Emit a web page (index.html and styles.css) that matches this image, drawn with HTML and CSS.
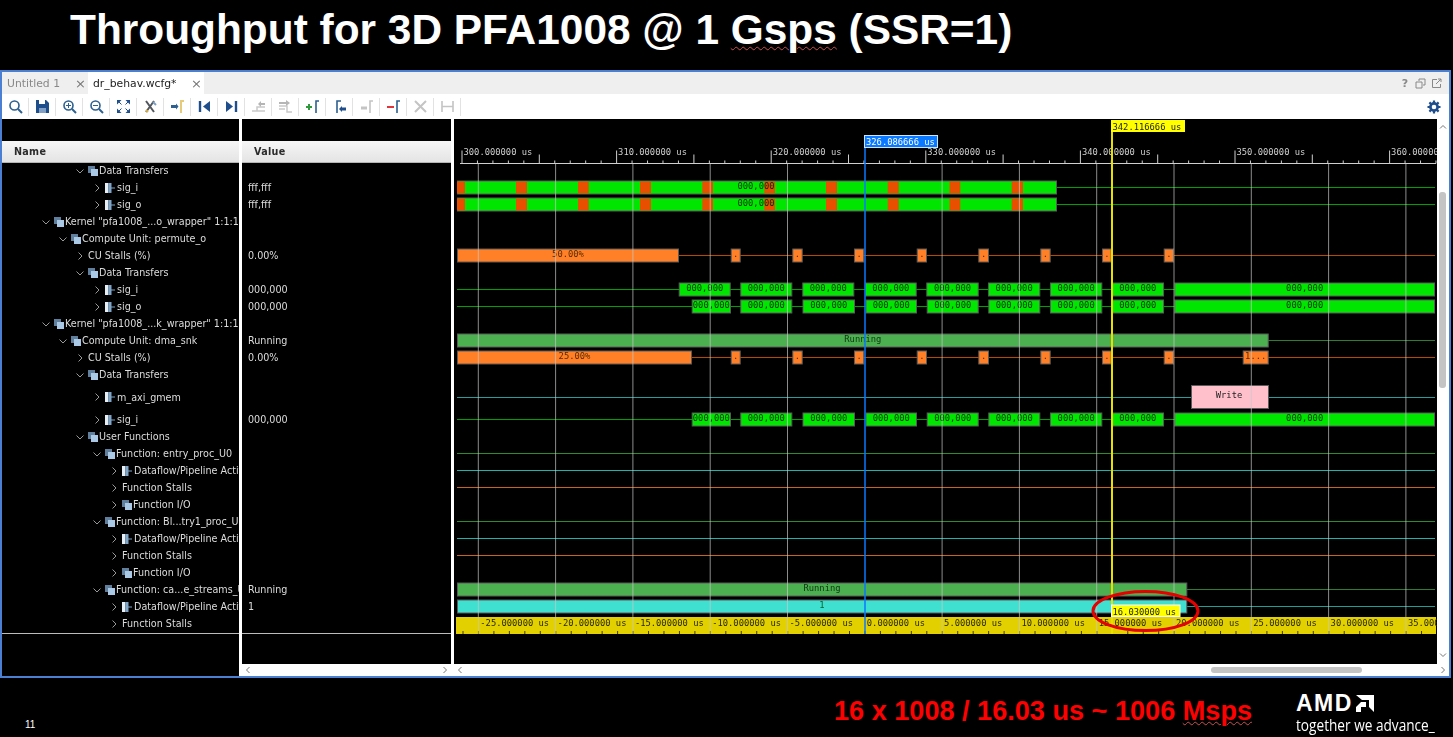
FILE: index.html
```html
<!DOCTYPE html>
<html lang="en">
<head>
    <meta charset="UTF-8">
    <title>Throughput for 3D PFA1008 @ 1 Gsps (SSR=1)</title>
    <link rel="stylesheet" href="styles.css">
</head>
<body>
    <h1 class="title">Throughput for 3D PFA1008 @ 1 <span class="squiggle">Gsps</span> (SSR=1)</h1>

    <div class="window">
        <div class="tabs">
            <div class="tab">Untitled 1<span class="tab-close">&times;</span></div>
            <div class="tab active">dr_behav.wcfg*<span class="tab-close">&times;</span></div>
            <div class="win-controls">
                <span class="win-help">?</span>
                <svg width="11" height="11" viewBox="0 0 11 11"><path d="M4 3V1h6v6H8M1 4h6v6H1z" fill="none" stroke="#888"/></svg>
                <svg width="11" height="11" viewBox="0 0 11 11"><path d="M6 1.500H1.500v8h8V6M5 6l5-5M7 1h3v3" fill="none" stroke="#888"/></svg>
            </div>
        </div>

        <div class="toolbar">
            <div id="tools" class="tools"></div>
            <svg class="gear" width="14" height="14" viewBox="0 0 14 14">
                <circle cx="7" cy="7" r="3.600" fill="none" stroke="#1f4e8c" stroke-width="2.600"/>
                <path d="M7 .5v2.500M7 11v2.500M.5 7H3M11 7h2.500M2.400 2.400l1.800 1.800M9.800 9.800l1.800 1.800M2.400 11.600l1.800-1.800M9.800 4.200l1.800-1.800" stroke="#1f4e8c" stroke-width="2.200"/>
            </svg>
        </div>

        <div class="panes">
            <div class="pane name-pane">
                <div class="pane-head">Name</div>
                <div id="names" class="rows"></div>
                <div class="pane-foot"></div>
            </div>
            <div class="pane value-pane">
                <div class="pane-head">Value</div>
                <div id="values" class="rows"></div>
                <div class="pane-foot"></div>
                <div class="hscroll">
                    <svg class="arrow" viewBox="0 0 8 8"><path d="M5.500 1l-3 3 3 3"/></svg>
                    <svg class="arrow" viewBox="0 0 8 8"><path d="M2.500 1l3 3-3 3"/></svg>
                </div>
            </div>
            <div class="wave-pane">
                <svg id="wave" class="wave" viewBox="454 119 983 545"></svg>
                <div class="hscroll">
                    <svg class="arrow" viewBox="0 0 8 8"><path d="M5.500 1l-3 3 3 3"/></svg>
                    <div class="hscroll-thumb"></div>
                </div>
            </div>
            <div class="vscroll">
                <svg class="arrow vscroll-up" viewBox="0 0 8 8"><path d="M1 5.500l3-3 3 3"/></svg>
                <div class="vscroll-thumb"></div>
                <svg class="arrow vscroll-down" viewBox="0 0 8 8"><path d="M1 2.500l3 3 3-3"/></svg>
                <svg class="arrow vscroll-corner" viewBox="0 0 8 8"><path d="M2.500 1l3 3-3 3"/></svg>
            </div>
        </div>
    </div>

    <div class="footer">
        <span class="page-no">11</span>
        <span class="formula">16 x 1008 / 16.03 us ~ 1006 <span class="squiggle">Msps</span></span>
        <div class="brand">
            <div class="brand-mark">
                <span class="brand-name">AMD</span>
                <svg width="18" height="17" viewBox="0 0 18 17">
                    <path d="M0 0h18v17l-5-5V5H6zM0 12l5-5h5v5H5v5H0z" fill="#fff"/>
                </svg>
            </div>
            <div class="brand-tag">together we advance_</div>
        </div>
    </div>

    <script src="script.js"></script>
</body>
</html>
```

FILE: styles.css
```css
* {
    box-sizing: border-box;
    margin: 0;
    padding: 0;
}

html, body {
    width: 1453px;
    height: 737px;
    overflow: hidden;
    background-color: #000;
}

.squiggle {
    text-decoration: underline wavy #c9504f 1px;
    text-underline-offset: 2px;
}

.title {
    height: 70px;
    padding: 7px 0 0 70px;
    color: #fff;
    font-family: "Liberation Sans", Arial, sans-serif;
    font-size: 42.4px;
    font-weight: 700;
    line-height: 46px;
    white-space: nowrap;
}

/* window - the capture is a scaled screenshot, hence the slight softening */
.window {
    width: 1451px;
    height: 608px;
    display: flex;
    flex-direction: column;
    border: 2px solid #4a7fd4;
    font-family: "DejaVu Sans", sans-serif;
    font-size: 9.6px;
    filter: blur(.3px);
}

.tabs {
    height: 22px;
    display: flex;
    align-items: stretch;
    background-color: #efefef;
    flex-shrink: 0;
}

.tab {
    width: 86px;
    display: flex;
    justify-content: space-between;
    align-items: center;
    padding: 0 2px 0 5px;
    color: #888;
    font-size: 10.8px;
}

.tab.active {
    width: 116px;
    background-color: #fff;
    color: #222;
}

.tab-close {
    color: #777;
    font-size: 13px;
}

.win-controls {
    margin-left: auto;
    display: flex;
    align-items: center;
    gap: 5px;
    padding-right: 7px;
}

.win-help {
    width: 10px;
    color: #888;
    font-size: 11px;
    font-weight: 700;
    text-align: center;
}

.toolbar {
    height: 25px;
    display: flex;
    align-items: center;
    justify-content: space-between;
    padding-right: 8px;
    background-color: #fff;
    flex-shrink: 0;
}

.tools {
    display: flex;
    align-items: center;
}

.tool {
    width: 27px;
    height: 18px;
    display: flex;
    align-items: center;
    justify-content: center;
    border-right: 1px solid #e2e2e2;
}

/* panes */
.panes {
    flex: 1;
    display: flex;
    min-height: 0;
    background-color: #000;
}

.pane {
    display: flex;
    flex-direction: column;
    padding-top: 22px;
    border-right: 3px solid #fff;
    overflow: hidden;
}

.name-pane {
    width: 240px;
}

.value-pane {
    width: 212px;
}

.pane-head {
    height: 22px;
    padding-left: 12px;
    line-height: 22px;
    flex-shrink: 0;
    background: linear-gradient(#f6f6f6, #e4e4e4);
    border-bottom: 1px solid #b5b5b5;
    color: #2b2b2b;
    font-weight: 700;
    letter-spacing: .3px;
}

.rows {
    height: 472px;
    margin-top: -1px;
    flex-shrink: 0;
    overflow: hidden;
    border-bottom: 1px solid #bcbcbc;
}

.pane-foot {
    flex: 1;
}

.row {
    height: 17px;
    display: flex;
    align-items: center;
    color: #dcdcdc;
    white-space: nowrap;
    overflow: hidden;
}

.row.tall {
    height: 28px;
}

.row-label {
    min-width: 0;
    line-height: 17px;
    overflow: hidden;
}

.value-pane .row {
    padding-left: 6px;
}

.chevron {
    width: 8px;
    height: 8px;
    flex-shrink: 0;
    margin-right: 4px;
}

.node-icon {
    width: 10px;
    height: 10px;
    flex-shrink: 0;
    margin-right: 1px;
}

.node-icon.sig {
    margin-right: 2px;
}

/* waveform */
.wave-pane {
    flex: 1;
    display: flex;
    flex-direction: column;
    min-width: 0;
}

.wave {
    width: 983px;
    height: 545px;
    display: block;
    flex-shrink: 0;
}

.wave text {
    font-family: "DejaVu Sans Mono", monospace;
    font-size: 8.8px;
}

.arrow {
    width: 8px;
    height: 8px;
    flex-shrink: 0;
}

.arrow path {
    fill: none;
    stroke: #777;
}

.hscroll {
    height: 12px;
    flex-shrink: 0;
    display: flex;
    align-items: center;
    justify-content: space-between;
    padding: 0 2px;
    background-color: #fff;
    position: relative;
}

.hscroll-thumb {
    position: absolute;
    left: 757px;
    top: 3px;
    width: 151px;
    height: 6px;
    border-radius: 3px;
    background-color: #c4c4c4;
}

.vscroll {
    width: 12px;
    display: flex;
    flex-direction: column;
    padding-left: 2px;
    background-color: #fff;
    position: relative;
}

.vscroll-up {
    margin-top: 4px;
}

.vscroll-thumb {
    width: 7px;
    height: 196px;
    margin-top: 61px;
    border-radius: 3px;
    background-color: #c4c4c4;
}

.vscroll-down {
    margin-top: auto;
    margin-bottom: 7px;
}

.vscroll-corner {
    margin-bottom: 2px;
}

/* footer */
.footer {
    height: 59px;
    position: relative;
    color: #fff;
    font-family: "Liberation Sans", Arial, sans-serif;
}

.page-no {
    position: absolute;
    left: 25px;
    top: 41px;
    font-size: 10px;
}

.formula {
    position: absolute;
    left: 834px;
    top: 17px;
    color: #f00;
    font-size: 27.1px;
    font-weight: 700;
    white-space: nowrap;
}

.formula .squiggle {
    text-underline-offset: 1px;
}

.brand {
    position: absolute;
    left: 1296px;
    top: 16px;
}

.brand-mark {
    display: flex;
    align-items: center;
    gap: 3px;
    height: 18px;
}

.brand-name {
    font-size: 23px;
    font-weight: 700;
    letter-spacing: 1.5px;
    line-height: 18px;
}

.brand-tag {
    margin-top: 3px;
    font-family: "Open Sans", sans-serif;
    font-size: 15.5px;
    line-height: 20px;
    white-space: nowrap;
    transform: scaleX(.88);
    transform-origin: left;
}
```

FILE: script.js
```js
// tree rows: level, icon type, label, value, flag
var TREE = [
    [2, 'group', 'Data Transfers', '', 'open'],
    [3, 'sig', 'sig_i', 'fff,fff'],
    [3, 'sig', 'sig_o', 'fff,fff'],
    [0, 'group', 'Kernel "pfa1008_...o_wrapper" 1:1:1', '', 'open'],
    [1, 'group', 'Compute Unit: permute_o', '', 'open'],
    [2, '', 'CU Stalls (%)', '0.00%'],
    [2, 'group', 'Data Transfers', '', 'open'],
    [3, 'sig', 'sig_i', '000,000'],
    [3, 'sig', 'sig_o', '000,000'],
    [0, 'group', 'Kernel "pfa1008_...k_wrapper" 1:1:1', '', 'open'],
    [1, 'group', 'Compute Unit: dma_snk', 'Running', 'open'],
    [2, '', 'CU Stalls (%)', '0.00%'],
    [2, 'group', 'Data Transfers', '', 'open'],
    [3, 'sig', 'm_axi_gmem', '', 'tall'],
    [3, 'sig', 'sig_i', '000,000'],
    [2, 'group', 'User Functions', '', 'open'],
    [3, 'group', 'Function: entry_proc_U0', '', 'open'],
    [4, 'sig', 'Dataflow/Pipeline Activity', ''],
    [4, '', 'Function Stalls', ''],
    [4, 'group', 'Function I/O', ''],
    [3, 'group', 'Function: Bl...try1_proc_U0', '', 'open'],
    [4, 'sig', 'Dataflow/Pipeline Activity', ''],
    [4, '', 'Function Stalls', ''],
    [4, 'group', 'Function I/O', ''],
    [3, 'group', 'Function: ca...e_streams_U0', 'Running', 'open'],
    [4, 'sig', 'Dataflow/Pipeline Activity', '1'],
    [4, '', 'Function Stalls', '']
];

var ICON_GROUP = '<svg class="node-icon" viewBox="0 0 10 10"><rect x="0" y="0" width="7" height="7" fill="#5f7f9c"/><rect x="3" y="3" width="7" height="7" fill="#a9c9e6"/></svg>';
var ICON_SIG = '<svg class="node-icon sig" viewBox="0 0 10 10"><rect x="0" y="0" width="3.5" height="10" fill="#e6eef6"/><rect x="3.5" y="0" width="3" height="10" fill="#7fa6c9"/><path d="M6 5h4" stroke="#7fa6c9"/></svg>';

function chevron(open) {
    var d = open ? 'M.5 2.5l3.5 3.5 3.5-3.5' : 'M2.500 .5l3.500 3.500-3.500 3.500';
    return '<svg class="chevron" viewBox="0 0 8 8"><path d="' + d + '" fill="none" stroke="#999"/></svg>';
}

function buildTree() {
    var names = document.getElementById('names');
    var values = document.getElementById('values');
    TREE.forEach(function(r) {
        var level = r[0], type = r[1], label = r[2], value = r[3], flag = r[4];
        var icon = type === 'group' ? ICON_GROUP : type === 'sig' ? ICON_SIG : '';
        var cls = flag === 'tall' ? 'row tall' : 'row';
        var pad = 40 + 17 * level;
        names.insertAdjacentHTML('beforeend',
            '<div class="' + cls + '" style="padding-left:' + pad + 'px">' +
            chevron(flag === 'open') + icon + '<span class="row-label">' + label + '</span></div>');
        values.insertAdjacentHTML('beforeend', '<div class="' + cls + '">' + value + '</div>');
    });
}

var BLUE = '#2d5f8f';
var MAG = '<circle cx="6.500" cy="6.500" r="4.500" fill="none" stroke="' + BLUE + '" stroke-width="1.600"/><path d="M10 10l4 4" stroke="' + BLUE + '" stroke-width="2"/>';
var TOOL_ICONS = [
    MAG,
    '<path d="M1 1h10l3 3v10H1z" fill="#1f4e8c"/><rect x="4" y="1" width="6" height="4" fill="#fff"/><rect x="4" y="9" width="7" height="5" fill="#7fa0c4"/>',
    MAG + '<path d="M4 6.500h5M6.500 4v5" stroke="' + BLUE + '"/>',
    MAG + '<path d="M4 6.500h5" stroke="' + BLUE + '"/>',
    '<path d="M1 1h4.500L1 5.500zM14 1v4.500L9.500 1zM14 14H9.500L14 9.500zM1 14V9.500L5.500 14z" fill="#1f4e8c"/><path d="M3 3l2.500 2.500M12 3L9.500 5.500M12 12L9.500 9.500M3 12l2.500-2.500" stroke="#1f4e8c"/>',
    '<path d="M3 2l8 11M11 2L3 13" stroke="#50565c" stroke-width="2"/><path d="M10 3l3 3" stroke="#7fa0c4" stroke-width="2"/><path d="M3 11l2 2" stroke="#d9b44a" stroke-width="2"/>',
    '<path d="M1 7.500h5" stroke="' + BLUE + '" stroke-width="3"/><path d="M6 4.500l2.500 3-2.500 3z" fill="' + BLUE + '"/><path d="M14 2h-3v12" fill="none" stroke="#e6cb78" stroke-width="2"/>',
    '<path d="M3 2v11" stroke="#1f4e8c" stroke-width="2.400"/><path d="M13 2v11L6 7.500z" fill="#1f4e8c"/>',
    '<path d="M12 2v11" stroke="#1f4e8c" stroke-width="2.400"/><path d="M2 2v11l7-5.500z" fill="#1f4e8c"/>',
    '<path d="M1 12h5V8h8M6 12h8" fill="none" stroke="#c9c9c9" stroke-width="1.500"/><path d="M10 2L7 5l3 3z" fill="#b5b5b5"/><path d="M9 5h5" stroke="#b5b5b5" stroke-width="2"/>',
    '<path d="M1 7h8v6h5M1 10h6" fill="none" stroke="#c9c9c9" stroke-width="1.500"/><path d="M1 4h7" stroke="#b5b5b5" stroke-width="2"/><path d="M8 1l4 3-4 3z" fill="#b5b5b5"/>',
    '<path d="M1 8h6M4 5v6" stroke="#2e9a3c" stroke-width="2"/><path d="M14 2h-3v12" fill="none" stroke="' + BLUE + '" stroke-width="1.600"/>',
    '<path d="M5 14V2h4" fill="none" stroke="' + BLUE + '" stroke-width="1.600"/><path d="M9 10h5" stroke="#1f4e8c" stroke-width="3"/><path d="M10 7l-3 3 3 3z" fill="#1f4e8c"/>',
    '<path d="M2 9h6" stroke="#c4c4c4" stroke-width="3"/><path d="M14 2h-3v12" fill="none" stroke="#c4c4c4" stroke-width="1.600"/>',
    '<path d="M1 8h7" stroke="#e0333a" stroke-width="2"/><path d="M14 2h-3v12" fill="none" stroke="' + BLUE + '" stroke-width="1.600"/>',
    '<path d="M2 2l11 11M13 2L2 13" stroke="#c4c4c4" stroke-width="2"/>',
    '<path d="M2 2v11M13 2v11" stroke="#c4c4c4" stroke-width="1.600"/><path d="M2 7.500h11" stroke="#c4c4c4" stroke-width="1.500"/>'
];

function buildToolbar() {
    var tools = document.getElementById('tools');
    TOOL_ICONS.forEach(function(body) {
        tools.insertAdjacentHTML('beforeend',
            '<div class="tool"><svg width="15" height="15" viewBox="0 0 15 15">' + body + '</svg></div>');
    });
}

// waveform, drawn in page coordinates (see the viewBox)
var out = [];

function rect(x1, y1, x2, y2, fill, stroke) {
    out.push('<rect x="' + x1 + '" y="' + y1 + '" width="' + (x2 - x1) + '" height="' + (y2 - y1) +
        '" fill="' + fill + '"' + (stroke ? ' stroke="' + stroke + '"' : '') + '/>');
}

function line(x1, y1, x2, y2, color, w) {
    out.push('<line x1="' + x1 + '" y1="' + y1 + '" x2="' + x2 + '" y2="' + y2 +
        '" stroke="' + color + '" stroke-width="' + (w || 1) + '"/>');
}

function text(x, y, s, color, anchor) {
    out.push('<text x="' + x + '" y="' + y + '" fill="' + color + '" text-anchor="' + (anchor || 'start') + '">' + s + '</text>');
}

var EDGE = '#5a5a5a';
var RIGHT = 1435;

// one signal: baseline plus boxes [x1, x2, label, label x]
function signal(cy, base, fill, boxes, textColor) {
    line(457, cy, RIGHT, cy, base);
    boxes.forEach(function(b) {
        rect(b[0] + .5, cy - 6.5, b[1] - .5, cy + 6.5, fill, EDGE);
        if (b[2]) text(b[3] || (b[0] + b[1]) / 2, cy + 1.5, b[2], textColor || '#003300', 'middle');
    });
}

var SEG_I = [[678.7, 730.7], [740.3, 792.3], [802.3, 854.3], [865, 916.7], [926.3, 978.7], [988, 1040.3], [1050, 1102.3], [1111.7, 1164], [1174.3, 1435]];
var SEG_O = [[691.7, 731], [740.3, 792.3], [802.5, 855], [865.5, 917], [926.7, 978.7], [988.3, 1040.3], [1050, 1102.3], [1111.7, 1164], [1174.3, 1435]];
var STALLS = [[730.7, 740.7], [792.3, 802.7], [854, 864.3], [916.7, 927], [978.3, 989], [1040.3, 1050.7], [1102, 1111.7], [1163.7, 1174]];
var HOT = [[457, 465], [516, 527], [578, 588.7], [640, 651], [702.3, 713], [764.3, 775], [826, 837], [887.7, 898.7], [949.5, 960.3], [1011.7, 1023]];

function labelled(segs, label) {
    return segs.map(function(s) { return [s[0], s[1], label]; });
}

function hotBus(cy) {
    line(457, cy, RIGHT, cy, '#00a000');
    rect(457.5, cy - 6.5, 1056.5, cy + 6.5, '#00e600', EDGE);
    HOT.forEach(function(h) { rect(h[0], cy - 6, h[1], cy + 6, '#e85000'); });
    text(756, cy + 1.5, '000,000', '#003300', 'middle');
}

function buildWave() {
    var i, x;

    // signals
    hotBus(187.5);
    hotBus(204.5);

    signal(255.5, '#b84a00', '#ff8026', [[457, 679, '50.00%']].concat(labelled(STALLS, '.')), '#5a2a00');
    signal(289.5, '#00a000', '#00e600', labelled(SEG_I, '000,000'));
    signal(306.5, '#00a000', '#00e600', labelled(SEG_O, '000,000'));
    signal(340.5, '#2e7d32', '#4caf50', [[457, 1268.7, 'Running']], '#0c3a0f');
    signal(357.5, '#b84a00', '#ff8026', [[457, 692, '25.00%']].concat(labelled(STALLS, '.'), [[1242.7, 1268.7, '1...']]), '#5a2a00');

    line(457, 397.5, RIGHT, 397.5, '#2b9c9c');
    rect(1191.5, 385.5, 1268.5, 408.5, '#ffc0cb', EDGE);
    text(1229, 398, 'Write', '#222', 'middle');

    signal(419.5, '#00a000', '#00e600', labelled(SEG_O, '000,000'));

    [453.5, 521.5].forEach(function(y) { line(457, y, RIGHT, y, '#2e8b2e'); });
    [470.5, 538.5].forEach(function(y) { line(457, y, RIGHT, y, '#20b2aa'); });
    [487.5, 555.5].forEach(function(y) { line(457, y, RIGHT, y, '#c8641e'); });

    signal(589.5, '#2e7d32', '#4caf50', [[457, 1187.3, 'Running', 822]], '#0c3a0f');
    signal(606.5, '#1e9f95', '#40e0d0', [[457, 1187.3, '1', 822]], '#063');

    // bottom ruler
    rect(456, 617, 1436, 634, '#e2d000');
    var marks = ['-25', '-20', '-15', '-10', '-5', '0', '5', '10', '15', '20', '25', '30', '35'];
    marks.forEach(function(n, k) {
        text(480.3 + 77.3 * k, 626, n + '.000000 us', '#2a2800');
    });
    for (x = 463; x < 1436; x += 15.46) {
        line(x, 631, x, 634, '#3c3a00');
    }

    // top ruler
    line(460, 163.5, 1436, 163.5, '#cfcfcf');
    for (i = 0; i < 64; i++) {
        x = 462 + i * 15.46;
        if (x > 1436) break;
        var h = i % 10 === 0 ? 13 : i % 5 === 0 ? 9 : 3;
        line(x, 163.5 - h, x, 163.5, '#cfcfcf');
    }
    for (i = 0; i < 7; i++) {
        text(463.5 + 154.6 * i, 155, (300 + i * 10) + '.000000 us', '#cfcfcf');
    }

    // grid
    for (i = 0; i < 13; i++) {
        x = 478.3 + 77.3 * i;
        if (i !== 5) line(x, 164, x, 634, 'rgba(200,200,200,.7)');
    }

    // cursors
    line(865, 147, 865, 634, '#0a78ff', 1.5);
    rect(864.5, 135.5, 937.5, 147.5, '#0a78ff', '#cfe4ff');
    text(866, 145, '326.086666 us', '#fff');

    line(1112, 132, 1112, 634, '#e8e000', 2);
    rect(1111, 120, 1185, 132, '#ffff00');
    text(1112.5, 129.5, '342.116666 us', '#222');

    // marker delta
    rect(1111.5, 605, 1180, 616.5, '#ffff00', '#fff');
    text(1112.5, 614.5, '16.030000 us', '#222');
    out.push('<ellipse cx="1145.500" cy="611" rx="52.500" ry="19.500" fill="none" stroke="#e60000" stroke-width="3"/>');

    document.getElementById('wave').innerHTML = out.join('');
}

buildTree();
buildToolbar();
buildWave();
```
